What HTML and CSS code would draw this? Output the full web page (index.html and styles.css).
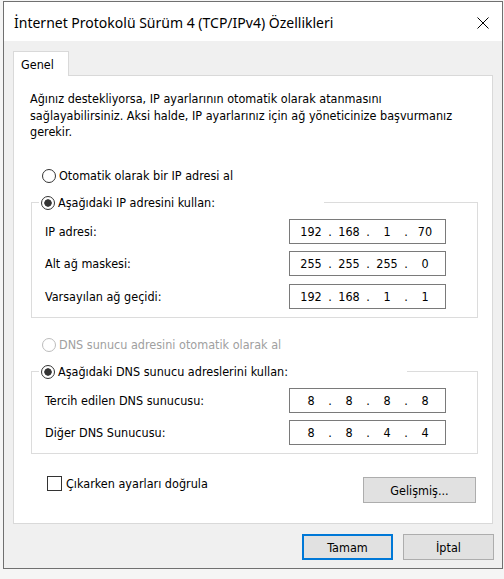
FILE: index.html
```html
<!DOCTYPE html>
<html lang="tr">
<head>
<meta charset="utf-8">
<title>İnternet Protokolü Sürüm 4 (TCP/IPv4) Özellikleri</title>
<link rel="stylesheet" href="styles.css">
</head>
<body>
<div class="window">
  <div class="titlebar">
    <span class="title">İnternet Protokolü Sürüm 4 (TCP/IPv4) Özellikleri</span>
    <svg class="close" width="12" height="12" viewBox="0 0 12 12"><path d="M0.5 0.5 L11.5 11.5 M11.5 0.5 L0.5 11.5" stroke="#000" stroke-width="1" fill="none"/></svg>
  </div>
  <div class="client">
    <div class="tabs"><div class="tab">Genel</div></div>
    <div class="panel">
      <p class="intro">Ağınız destekliyorsa, IP ayarlarının otomatik olarak atanmasını<br>sağlayabilirsiniz. Aksi halde, IP ayarlarınız için ağ yöneticinize başvurmanız<br>gerekir.</p>

      <div class="option option-auto"><span class="radio"></span><span>Otomatik olarak bir IP adresi al</span></div>
      <fieldset class="group">
        <legend class="option legend-ip"><span class="radio checked"></span><span>Aşağıdaki IP adresini kullan:</span></legend>
        <div class="row"><span>IP adresi:</span>
          <div class="ipbox"><span class="f">192</span><span class="d">.</span><span class="f">168</span><span class="d">.</span><span class="f">1</span><span class="d">.</span><span class="f">70</span></div></div>
        <div class="row"><span>Alt ağ maskesi:</span>
          <div class="ipbox"><span class="f">255</span><span class="d">.</span><span class="f">255</span><span class="d">.</span><span class="f">255</span><span class="d">.</span><span class="f">0</span></div></div>
        <div class="row"><span>Varsayılan ağ geçidi:</span>
          <div class="ipbox"><span class="f">192</span><span class="d">.</span><span class="f">168</span><span class="d">.</span><span class="f">1</span><span class="d">.</span><span class="f">1</span></div></div>
      </fieldset>

      <div class="option option-dns disabled"><span class="radio"></span><span>DNS sunucu adresini otomatik olarak al</span></div>
      <fieldset class="group">
        <legend class="option legend-dns"><span class="radio checked"></span><span>Aşağıdaki DNS sunucu adreslerini kullan:</span></legend>
        <div class="row"><span>Tercih edilen DNS sunucusu:</span>
          <div class="ipbox"><span class="f">8</span><span class="d">.</span><span class="f">8</span><span class="d">.</span><span class="f">8</span><span class="d">.</span><span class="f">8</span></div></div>
        <div class="row"><span>Diğer DNS Sunucusu:</span>
          <div class="ipbox"><span class="f">8</span><span class="d">.</span><span class="f">8</span><span class="d">.</span><span class="f">4</span><span class="d">.</span><span class="f">4</span></div></div>
      </fieldset>

      <div class="bottom-row">
        <div class="check-wrap"><span class="checkbox"></span><span>Çıkarken ayarları doğrula</span></div>
        <button class="btn btn-adv">Gelişmiş...</button>
      </div>
    </div>
    <div class="footer">
      <button class="btn btn-default">Tamam</button>
      <button class="btn">İptal</button>
    </div>
  </div>
</div>
</body>
</html>
```
FILE: styles.css
```css
html, body {
  margin: 0;
  padding: 0;
}
body {
  background: #f5f5f5;
  font-family: "DejaVu Sans Condensed", "DejaVu Sans", sans-serif;
  font-size: 12.5px;
  color: #000;
  width: 504px;
  height: 579px;
  overflow: hidden;
}
.window {
  margin: 1px 0 0 3px;
  width: 500px;
  height: 568px;
  box-sizing: border-box;
  border: 1px solid #707070;
  background: #f0f0f0;
  display: flex;
  flex-direction: column;
}
.titlebar {
  height: 39px;
  background: #fff;
  display: flex;
  align-items: center;
  justify-content: space-between;
  padding: 0 13px 0 10px;
  flex: none;
}
.title {
  font-family: "Noto Sans", "Open Sans", sans-serif;
  font-size: 14px;
  color: #000;
  padding-top: 1px;
}
.close {
  display: block;
  margin-top: 2px;
}
.client {
  padding: 10px 8px 0 9px;
  flex: 1;
  display: flex;
  flex-direction: column;
}
.tabs {
  display: flex;
}
.tab {
  position: relative;
  z-index: 1;
  width: 56px;
  height: 25px;
  box-sizing: border-box;
  border: 1px solid #d9d9d9;
  border-bottom: none;
  background: #fff;
  padding: 5px 0 0 7px;
  margin-bottom: -1px;
}
.panel {
  width: 480px;
  height: 449px;
  box-sizing: border-box;
  border: 1px solid #d9d9d9;
  background: #fff;
  padding: 15px 14px 0 17px;
}
.intro {
  margin: 0 0 0 -1px;
  line-height: 16.5px;
  white-space: nowrap;
}
.option {
  display: flex;
  align-items: center;
  height: 16px;
  gap: 3px;
}
.option-auto {
  margin: 27px 0 0 11px;
}
.option-dns {
  margin: 19px 0 0 11px;
}
.disabled {
  color: #a0a0a0;
}
.radio {
  width: 14px;
  height: 14px;
  box-sizing: border-box;
  border: 1px solid #333;
  border-radius: 50%;
  background: #fff;
  flex: none;
}
.radio.checked {
  background: radial-gradient(circle, #333 0 3.4px, #fff 4px);
}
.disabled .radio {
  border-color: #bcbcbc;
}
.group {
  margin: 11px 0 0 0;
  padding: 0 31px 8px 13px;
  border: 1px solid #dcdcdc;
  width: 447px;
  box-sizing: border-box;
  min-width: 0;
}
.group legend {
  padding: 0 0 0 2px;
  margin-left: -6px;
  box-sizing: border-box;
}
.legend-ip {
  width: 285px;
}
.legend-dns {
  width: 368px;
}
.row {
  display: flex;
  align-items: center;
  justify-content: space-between;
  margin-top: 7.5px;
}
.row:first-of-type {
  margin-top: 8px;
}
.ipbox {
  width: 157px;
  height: 25px;
  box-sizing: border-box;
  border: 1px solid #7a7a7a;
  display: flex;
  align-items: center;
  padding: 0 3px 0 5px;
}
.ipbox .f {
  width: 32px;
  text-align: center;
}
.ipbox .d {
  width: 6px;
  text-align: center;
}
.bottom-row {
  display: flex;
  justify-content: space-between;
  align-items: flex-start;
  margin-top: 22px;
  padding: 0 2px 0 0;
}
.check-wrap {
  display: flex;
  align-items: center;
  gap: 4px;
  margin-left: 16px;
  height: 15px;
}
.checkbox {
  width: 15px;
  height: 15px;
  box-sizing: border-box;
  border: 1px solid #333;
  background: #fff;
  flex: none;
}
.btn {
  font-family: inherit;
  font-size: 12.5px;
  color: #000;
  background: #e1e1e1;
  border: 1px solid #adadad;
  height: 26px;
  width: 91px;
  padding: 0;
  margin: 0;
}
.btn-adv {
  width: 113px;
  margin-top: 1px;
}
.btn-default {
  border: 2px solid #0078d7;
}
.footer {
  display: flex;
  justify-content: flex-end;
  gap: 10px;
  margin-top: 10px;
}
```
